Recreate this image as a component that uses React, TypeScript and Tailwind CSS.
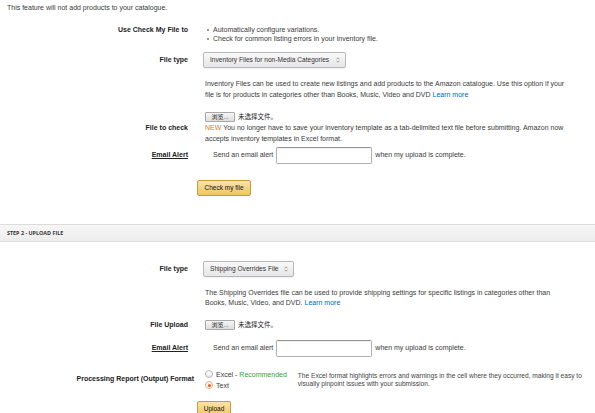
import React from "react";

const cjk = "font-['Liberation_Sans','Noto_Sans_CJK_SC',sans-serif]";

function Select({ label, w }: { label: string; w: string }) {
  return (
    <div
      className={`${w} h-[16px] flex items-center justify-between whitespace-nowrap pl-[6px] pr-[5px] rounded-[2px] border border-[#b5b8bd] bg-gradient-to-b from-[#f9f9f9] to-[#e6e6e6] shadow-[0_1px_0_rgba(0,0,0,0.05)] text-[#333] text-[6.6px]`}
    >
      <span>{label}</span>
      <svg width="4" height="6" viewBox="0 0 4 6">
        <path d="M0.5 2.3 L2 0.8 L3.5 2.3" fill="none" stroke="#777" strokeWidth="0.7" />
        <path d="M0.5 3.7 L2 5.2 L3.5 3.7" fill="none" stroke="#777" strokeWidth="0.7" />
      </svg>
    </div>
  );
}

function FileInput() {
  return (
    <div className={`flex items-center h-[10px] ${cjk}`}>
      <div className="h-[10px] w-[30px] flex items-center justify-center border border-[#a9a9a9] rounded-[1px] bg-gradient-to-b from-[#f6f6f6] to-[#dedede] text-[6px] text-[#222] leading-none">
        浏览...
      </div>
      <span className="ml-[3px] text-[6.5px] text-[#222] leading-none">未选择文件。</span>
    </div>
  );
}

function EmailRow() {
  return (
    <div className="flex items-center">
      <div className="w-[188px] text-right font-bold underline text-[#222]">Email Alert</div>
      <div className="ml-[25px] flex items-center">
        <span>Send an email alert</span>
        <div className="ml-[3px] w-[96px] h-[17px] rounded-[2px] border border-[#b0b0b0] border-t-[#949494] bg-white shadow-[inset_0_1px_1px_rgba(0,0,0,0.06)]" />
        <span className="ml-[3px]">when my upload is complete.</span>
      </div>
    </div>
  );
}

function YellowButton({ label, w }: { label: string; w: string }) {
  return (
    <div
      className={`${w} h-[16px] flex items-center justify-center rounded-[2px] border border-[#c89b3c] bg-gradient-to-b from-[#f8e3ad] to-[#eec65b] text-[#111] text-[6.5px]`}
    >
      {label}
    </div>
  );
}

export default function App() {
  return (
    <div className="w-[595px] h-[413px] overflow-hidden bg-white font-['Liberation_Sans',Arial,sans-serif] text-[7px] text-[#3a3a3a]">
      <p className="pl-[7px] pt-[3px] leading-[9px]">This feature will not add products to your catalogue.</p>

      {/* Use Check My File to */}
      <div className="flex mt-[13px] leading-[9px]">
        <div className="w-[188px] text-right font-bold text-[#222]">Use Check My File to</div>
        <ul className="ml-[19px]">
          <li className="flex items-center">
            <span className="w-[2px] h-[2px] bg-[#999] mr-[4px]" />
            Automatically configure variations.
          </li>
          <li className="flex items-center">
            <span className="w-[2px] h-[2px] bg-[#999] mr-[4px]" />
            Check for common listing errors in your inventory file.
          </li>
        </ul>
      </div>

      {/* File type */}
      <div className="flex items-center mt-[9px]">
        <div className="w-[188px] text-right font-bold text-[#222]">File type</div>
        <div className="ml-[15px]">
          <Select label="Inventory Files for non-Media Categories" w="w-[143px]" />
        </div>
      </div>

      <div className="ml-[205px] mt-[10px] leading-[11px] w-[380px]">
        Inventory Files can be used to create new listings and add products to the Amazon catalogue. Use this option if your
        <br />
        file is for products in categories other than Books, Music, Video and DVD{" "}
        <span className="text-[#0066c0]">Learn more</span>
      </div>

      {/* File to check */}
      <div className="flex items-center mt-[12px]">
        <div className="w-[188px] text-right font-bold text-[#222]">File to check</div>
        <div className="ml-[17px]">
          <FileInput />
          <div className="leading-[11px]">
            <span className="text-[#e47911]">NEW</span> You no longer have to save your inventory template as a tab-delimited text file before submitting. Amazon now
            <br />
            accepts inventory templates in Excel format.
          </div>
        </div>
      </div>

      <div className="mt-[3px]">
        <EmailRow />
      </div>

      <div className="ml-[197px] mt-[16px]">
        <YellowButton label="Check my file" w="w-[54px]" />
      </div>

      {/* Step 2 header */}
      <div className="mt-[28px] h-[18px] flex items-center pl-[7px] border-t border-[#dcdcdc] border-b border-b-[#e2e2e2] bg-gradient-to-b from-[#f7f7f7] to-[#ececec]">
        <span className="font-['Open_Sans',sans-serif] font-bold text-[5.4px] text-[#333]">STEP 2 - UPLOAD FILE</span>
      </div>

      {/* File type 2 */}
      <div className="flex items-center mt-[19px]">
        <div className="w-[188px] text-right font-bold text-[#222]">File type</div>
        <div className="ml-[15px]">
          <Select label="Shipping Overrides File" w="w-[91px]" />
        </div>
      </div>

      <div className="ml-[205px] mt-[11px] leading-[10px] w-[380px]">
        The Shipping Overrides file can be used to provide shipping settings for specific listings in categories other than
        <br />
        Books, Music, Video, and DVD. <span className="text-[#0066c0]">Learn more</span>
      </div>

      {/* File Upload */}
      <div className="flex items-center mt-[12px]">
        <div className="w-[188px] text-right font-bold text-[#222]">File Upload</div>
        <div className="ml-[17px]">
          <FileInput />
        </div>
      </div>

      <div className="mt-[9px]">
        <EmailRow />
      </div>

      {/* Processing report */}
      <div className="flex items-center mt-[12px]">
        <div className="w-[194px] text-right font-bold text-[#222]">Processing Report (Output) Format</div>
        <div className="ml-[11px] leading-[11px]">
          <div className="flex items-center h-[11px]">
            <span className="w-[8px] h-[8px] rounded-full border border-[#b8b8b8] bg-gradient-to-b from-white to-[#ececec]" />
            <span className="ml-[3px]">
              Excel - <span className="text-[#3b9b3b]">Recommended</span>
            </span>
          </div>
          <div className="flex items-center h-[11px]">
            <span className="w-[8px] h-[8px] rounded-full border border-[#e3b58c] bg-[#fdf1e6] flex items-center justify-center">
              <span className="w-[3px] h-[3px] rounded-full bg-[#d9652a]" />
            </span>
            <span className="ml-[3px]">Text</span>
          </div>
        </div>
        <div className="ml-[11px] text-[6.6px] leading-[8px] text-[#444] whitespace-nowrap">
          The Excel format highlights errors and warnings in the cell where they occurred, making it easy to
          <br />
          visually pinpoint issues with your submission.
        </div>
      </div>

      <div className="ml-[197px] mt-[10px]">
        <YellowButton label="Upload" w="w-[34px]" />
      </div>
    </div>
  );
}
